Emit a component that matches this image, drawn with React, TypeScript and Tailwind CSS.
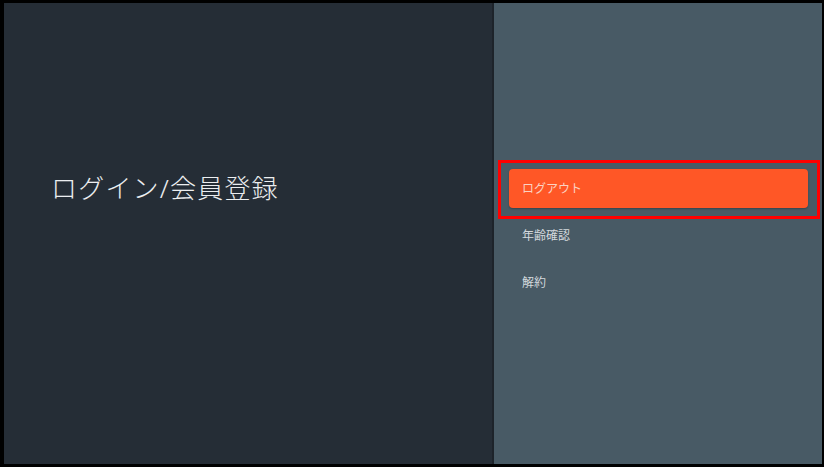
import React from 'react';

const menu = ['年齢確認', '解約'];

export default function App() {
  return (
    <div
      className="w-[824px] h-[467px] bg-black pl-[4px] pt-[3px] pr-[2px] pb-[3px] flex"
      style={{ fontFamily: '"Noto Sans", "Noto Sans CJK JP", sans-serif' }}
    >
      <div className="w-[490px] h-full bg-[#252d36] border-r-2 border-[#1d232a] pl-[47px] pt-[167px]">
        <h1 className="text-[26px] leading-[36px] tracking-[1.2px] text-[#eceef0] font-light">ログイン/会員登録</h1>
      </div>
      <div className="flex-1 h-full bg-[#485a65] pt-[157px] pl-[4px] pr-[2px]">
        <div className="border-[3px] border-[#ff0000] h-[59px] pl-[8px] pr-[9px] pt-[6px]">
          <button className="w-full h-[39px] rounded-[4px] bg-[#ff5726] text-left pl-[13px] text-[12px] text-[#fbd2c2] shadow-[0_1px_2px_rgba(0,0,0,0.25)]">
            ログアウト
          </button>
        </div>
        <div className="flex flex-col gap-[14px]">
          {menu.map((m) => (
            <div key={m} className="h-[33px] flex items-center pl-[24px] text-[12px] text-[#d3d9dd]">
              {m}
            </div>
          ))}
        </div>
      </div>
    </div>
  );
}
